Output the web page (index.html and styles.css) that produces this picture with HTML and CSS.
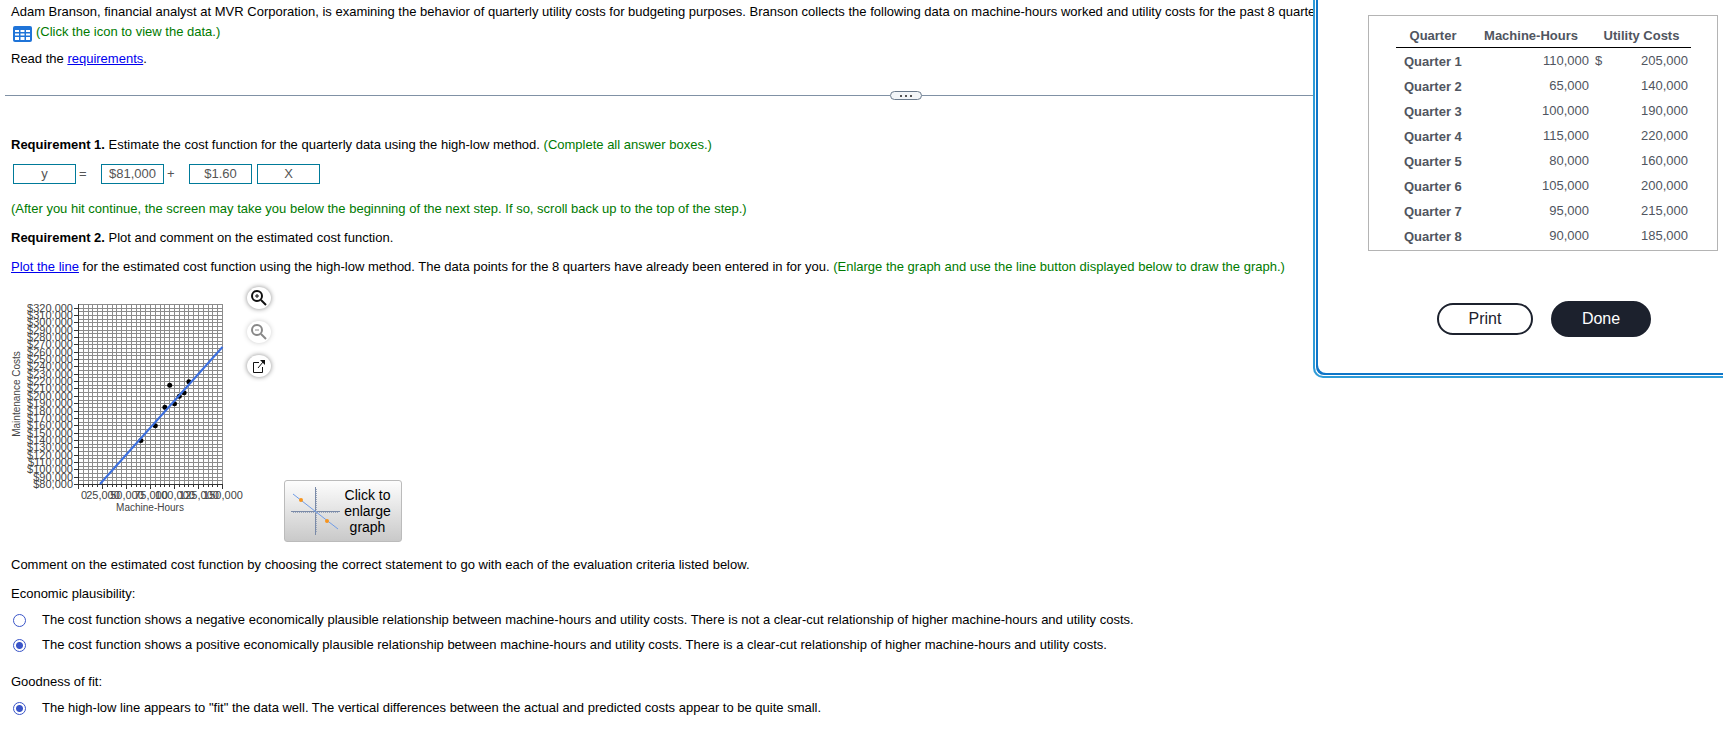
FILE: index.html
```html
<!DOCTYPE html>
<html lang="en">
<head>
  <meta charset="UTF-8">
  <meta name="viewport" content="width=device-width, initial-scale=1.0">
  <title>High-Low Method</title>
  <link rel="stylesheet" href="styles.css">
</head>
<body>

  <main class="exercise">
    <section class="intro">
      <p class="nowrap">Adam Branson, financial analyst at MVR Corporation, is examining the behavior of quarterly utility costs for budgeting purposes. Branson collects the following data on machine-hours worked and utility costs for the past 8 quarters:</p>
      <p class="data-link">
        <button type="button" class="icon-button" aria-label="View the data">
          <svg width="19" height="16" viewBox="0 0 19 16">
            <rect width="19" height="16" rx="2" fill="#1f74d8"/>
            <path fill="#fff" d="M2 4h4v2H2zM7.500 4h4v2h-4zM13 4h4v2h-4zM2 7.500h4v2H2zM7.500 7.500h4v2h-4zM13 7.500h4v2h-4zM2 11h4v3H2zM7.500 11h4v3h-4zM13 11h4v3h-4z"/>
          </svg>
        </button>
        <span class="hint">(Click the icon to view the data.)</span>
      </p>
      <p class="read">Read the <a href="#requirements">requirements</a>.</p>
    </section>

    <div class="divider">
      <span class="line"></span>
      <button type="button" class="handle" aria-label="Resize"><i></i><i></i><i></i></button>
      <span class="line"></span>
    </div>

    <section class="work" id="requirements">
      <p><b>Requirement 1.</b> Estimate the cost function for the quarterly data using the high-low method. <span class="hint">(Complete all answer boxes.)</span></p>
      <div class="formula">
        <input type="text" value="y" aria-label="Dependent variable">
        <span class="operator">=</span>
        <input type="text" value="$81,000" aria-label="Constant">
        <span class="operator">+</span>
        <input type="text" value="$1.60" aria-label="Slope">
        <input type="text" value="X" aria-label="Cost driver">
      </div>
      <p class="hint">(After you hit continue, the screen may take you below the beginning of the next step. If so, scroll back up to the top of the step.)</p>
      <p><b>Requirement 2.</b> Plot and comment on the estimated cost function.</p>
      <p><a href="#graph">Plot the line</a> for the estimated cost function using the high-low method. The data points for the 8 quarters have already been entered in for you. <span class="hint">(Enlarge the graph and use the line button displayed below to draw the graph.)</span></p>
    </section>

    <section class="graph-row" id="graph">
      <svg class="chart" id="chart" width="236" height="255" viewBox="0 0 236 255" role="img" aria-label="Maintenance costs by machine-hours"></svg>

      <div class="tools">
        <button type="button" class="tool" aria-label="Zoom in">
          <svg width="18" height="18" viewBox="0 0 18 18" fill="none" stroke="#111">
            <circle cx="7" cy="7" r="5" stroke-width="2"/>
            <path d="M7 5v4M5 7h4"/>
            <path d="M11 11l5 5" stroke-width="2"/>
          </svg>
        </button>
        <button type="button" class="tool disabled" aria-label="Zoom out" disabled>
          <svg width="18" height="18" viewBox="0 0 18 18" fill="none" stroke="#888">
            <circle cx="7" cy="7" r="5" stroke-width="2"/>
            <path d="M5 7h4"/>
            <path d="M11 11l5 5" stroke-width="2"/>
          </svg>
        </button>
        <button type="button" class="tool" aria-label="Open in a new window">
          <svg width="18" height="18" viewBox="0 0 18 18" fill="none" stroke="#111">
            <path d="M9 5.500H3.500v10h9V10"/>
            <path d="M8 11l5-6"/>
            <path d="M10 3h5v5z" fill="#111" stroke="none"/>
          </svg>
        </button>
      </div>

      <button type="button" class="enlarge">
        <svg width="50" height="48" viewBox="0 0 50 48" fill="none">
          <path d="M0 24.500h49" stroke="#7b8ba8"/>
          <path d="M24.500 0v48" stroke="#7b8ba8"/>
          <path d="M2 25.500h46" stroke="#9aa7bd" stroke-dasharray="1 1"/>
          <path d="M25.500 2v44" stroke="#9aa7bd" stroke-dasharray="1 1"/>
          <path d="M2 7l45 35" stroke="#6f9be6"/>
          <circle cx="10" cy="13" r="2" fill="#f7941d"/>
          <circle cx="36" cy="34" r="2" fill="#f7941d"/>
        </svg>
        <span>Click to enlarge graph</span>
      </button>
    </section>

    <form class="comments">
      <p>Comment on the estimated cost function by choosing the correct statement to go with each of the evaluation criteria listed below.</p>
      <fieldset>
        <legend>Economic plausibility:</legend>
        <label><input type="radio" name="plausibility"> The cost function shows a negative economically plausible relationship between machine-hours and utility costs. There is not a clear-cut relationship of higher machine-hours and utility costs.</label>
        <label><input type="radio" name="plausibility" checked> The cost function shows a positive economically plausible relationship between machine-hours and utility costs. There is a clear-cut relationship of higher machine-hours and utility costs.</label>
      </fieldset>
      <fieldset>
        <legend>Goodness of fit:</legend>
        <label><input type="radio" name="fit" checked> The high-low line appears to "fit" the data well. The vertical differences between the actual and predicted costs appear to be quite small.</label>
      </fieldset>
    </form>
  </main>

  <div class="dialog" role="dialog" aria-label="Data table">
    <div class="table-box">
      <table>
        <colgroup>
          <col class="col-quarter">
          <col class="col-hours">
          <col class="col-currency">
          <col>
        </colgroup>
        <thead>
          <tr><th>Quarter</th><th>Machine-Hours</th><th colspan="2">Utility Costs</th></tr>
        </thead>
        <tbody>
          <tr><th>Quarter 1</th><td>110,000</td><td class="currency">$</td><td>205,000</td></tr>
          <tr><th>Quarter 2</th><td>65,000</td><td></td><td>140,000</td></tr>
          <tr><th>Quarter 3</th><td>100,000</td><td></td><td>190,000</td></tr>
          <tr><th>Quarter 4</th><td>115,000</td><td></td><td>220,000</td></tr>
          <tr><th>Quarter 5</th><td>80,000</td><td></td><td>160,000</td></tr>
          <tr><th>Quarter 6</th><td>105,000</td><td></td><td>200,000</td></tr>
          <tr><th>Quarter 7</th><td>95,000</td><td></td><td>215,000</td></tr>
          <tr><th>Quarter 8</th><td>90,000</td><td></td><td>185,000</td></tr>
        </tbody>
      </table>
    </div>
    <div class="dialog-actions">
      <button type="button" class="print">Print</button>
      <button type="button" class="done">Done</button>
    </div>
  </div>

  <script>
    const chart = document.getElementById('chart');
    const plot = { left: 67, top: 17, width: 144, height: 180 };
    const bottom = plot.top + plot.height;
    const right = plot.left + plot.width;

    // machine-hours and costs, in thousands
    const points = [[110, 205], [65, 140], [100, 190], [115, 220], [80, 160], [105, 200], [95, 215], [90, 185]];

    const xPos = hours => plot.left + hours / 150 * plot.width;
    const yPos = cost => bottom - (cost - 80) / 245 * plot.height;
    const snap = n => Math.round(n) + 0.5;

    function add(tag, attrs, text) {
      const el = document.createElementNS('http://www.w3.org/2000/svg', tag);
      for (const key in attrs) el.setAttribute(key, attrs[key]);
      if (text) el.textContent = text;
      chart.appendChild(el);
    }

    function line(x1, y1, x2, y2, name) {
      add('line', { x1, y1, x2, y2, class: name });
    }

    // vertical grid lines and x axis
    for (let h = 0; h <= 150; h += 5) {
      const x = snap(xPos(h));
      line(x, plot.top, x, bottom, 'grid');
      line(x, bottom, x, bottom + (h % 25 ? 3 : 5), 'axis');
    }

    // horizontal grid lines and y axis
    for (let c = 80; c <= 325; c += 5) {
      const y = snap(yPos(c));
      line(plot.left, y, right + 1, y, 'grid');
      if (c % 10 === 0) {
        line(plot.left - 4, y, plot.left, y, 'axis');
        add('text', { x: 62, y: Math.round(yPos(c)) + 4, class: 'tick', 'text-anchor': 'end' }, '$' + c + ',000');
      }
    }

    line(plot.left + 0.5, plot.top, plot.left + 0.5, bottom, 'axis');
    line(plot.left, bottom + 0.5, right + 1, bottom + 0.5, 'axis');

    add('text', { x: 73, y: 212, class: 'tick', 'text-anchor': 'middle' }, '0');
    for (let h = 25; h <= 150; h += 25) {
      add('text', { x: xPos(h) + 1, y: 212, class: 'tick', 'text-anchor': 'middle' }, h + ',000');
    }

    points.forEach(p => add('circle', { cx: xPos(p[0]) + 0.5, cy: yPos(p[1]) + 0.5, r: 2.5 }));
    line(89, bottom, 211.5, 60, 'estimate');

    add('text', { x: 139, y: 224, class: 'title', 'text-anchor': 'middle' }, 'Machine-Hours');
    add('text', { x: 0, y: 0, class: 'title', 'text-anchor': 'middle', transform: 'translate(9 107) rotate(-90)' }, 'Maintenance Costs');
  </script>
</body>
</html>
```
FILE: styles.css
```css
* {
  box-sizing: border-box;
}

body {
  margin: 0;
  min-height: 100vh;
  position: relative;
  overflow: hidden;
  background: #fff;
  color: #000;
  font-family: "Liberation Sans", Arial, sans-serif;
  font-size: 13px;
  line-height: 20px;
}

p {
  margin: 0;
}

a {
  color: #0000ee;
}

button {
  font-family: inherit;
  cursor: pointer;
}

.nowrap {
  white-space: nowrap;
}

.hint {
  color: #007a00;
}

.intro {
  padding: 2px 0 0 11px;
}

.data-link {
  display: flex;
  gap: 4px;
  padding-left: 2px;
}

.icon-button {
  display: flex;
  align-self: flex-end;
  padding: 0;
  border: 0;
  background: none;
}

.read {
  margin-top: 7px;
}

/* divider with its drag handle */
.divider {
  display: grid;
  grid-template-columns: 21fr 32px 19fr;
  align-items: center;
  margin-top: 22px;
  padding-left: 5px;
}

.line {
  height: 1px;
  background: #8091a5;
}

.handle {
  display: flex;
  justify-content: center;
  align-items: center;
  gap: 3px;
  height: 9px;
  padding: 0;
  border: 1px solid #6a7a8c;
  border-radius: 5px;
  background: #f2f5f8;
}

.handle i {
  width: 2px;
  height: 2px;
  background: #555;
}

.work {
  display: flex;
  flex-direction: column;
  gap: 9px;
  padding: 35px 0 0 11px;
}

.formula {
  display: flex;
  align-items: center;
  padding: 0 0 6px 2px;
  color: #555;
}

.formula input {
  width: 63px;
  height: 20px;
  padding: 0;
  border: 1px solid #007a99;
  background: #fff;
  color: #555;
  font: inherit;
  text-align: center;
}

.formula input + input {
  margin-left: 5px;
}

.operator {
  width: 25px;
  padding-left: 3px;
}

.graph-row {
  display: flex;
  padding: 10px 0 0 11px;
}

.grid {
  stroke: #8c8c8c;
}

.axis {
  stroke: #333;
}

.estimate {
  stroke: #3b6fe0;
  stroke-width: 2px;
}

.tick {
  fill: #444;
  font-size: 11px;
}

.title {
  fill: #444;
  font-size: 10px;
}

.tools {
  display: flex;
  flex-direction: column;
  gap: 12px;
}

.tool {
  display: flex;
  justify-content: center;
  align-items: center;
  width: 24px;
  height: 22px;
  padding: 0;
  border: 0;
  border-radius: 50%;
  background: #fff;
  box-shadow: 0 0 5px #888;
}

.tool.disabled {
  box-shadow: 0 0 5px #ccc;
}

.enlarge {
  display: flex;
  align-items: center;
  align-self: flex-end;
  width: 118px;
  height: 62px;
  margin-left: 13px;
  padding: 0 7px 0 6px;
  border: 1px solid #bbb;
  border-radius: 3px;
  background: linear-gradient(#fdfdfd, #c9c9c9);
  color: #000;
  font-size: 14px;
  line-height: 16px;
}

.enlarge svg {
  flex: none;
}

.comments {
  padding: 13px 0 0 11px;
}

fieldset {
  margin: 9px 0 17px;
  padding: 0;
  border: 0;
}

legend {
  padding: 0;
  margin-bottom: 6px;
}

label {
  display: flex;
  align-items: center;
  gap: 16px;
  padding-left: 2px;
}

label + label {
  margin-top: 5px;
}

input[type="radio"] {
  width: 13px;
  height: 13px;
  margin: 0;
  appearance: none;
  border: 1px solid #3a55c8;
  border-radius: 50%;
}

input[type="radio"]:checked {
  background: radial-gradient(#3a55c8 3px, #fff 4px);
}

/* data dialog over the exercise */
.dialog {
  position: absolute;
  top: 0;
  right: 0;
  width: 410px;
  padding: 15px 5px 39px 53px;
  border: solid #2e9bd8;
  border-width: 0 0 2px 2px;
  border-radius: 0 0 0 10px;
  background: #fff;
  box-shadow: inset 1px -1px #fff, inset 3px -3px #0f76c8;
}

.table-box {
  padding: 9px 26px 3px 27px;
  border: 1px solid #b4b4b4;
}

table {
  width: 100%;
  table-layout: fixed;
  border-collapse: collapse;
  color: #505560;
}

.col-quarter {
  width: 74px;
}

.col-hours {
  width: 122px;
}

.col-currency {
  width: 25px;
}

th,
td {
  height: 25px;
  padding: 2px 3px 0;
  text-align: right;
}

thead th {
  height: 22px;
  padding: 0;
  border-bottom: 1px solid #000;
  text-align: center;
}

tbody th {
  padding: 4px 0 0 8px;
  text-align: left;
}

.currency {
  text-align: left;
}

.dialog-actions {
  display: flex;
  align-items: center;
  gap: 18px;
  margin: 50px 0 0 69px;
}

.dialog-actions button {
  border: 2px solid #1c212d;
  border-radius: 18px;
  font-size: 16px;
}

.print {
  width: 96px;
  height: 32px;
  background: #fff;
  color: #1c212d;
}

.done {
  width: 100px;
  height: 36px;
  background: #1c212d;
  color: #fff;
}
```
